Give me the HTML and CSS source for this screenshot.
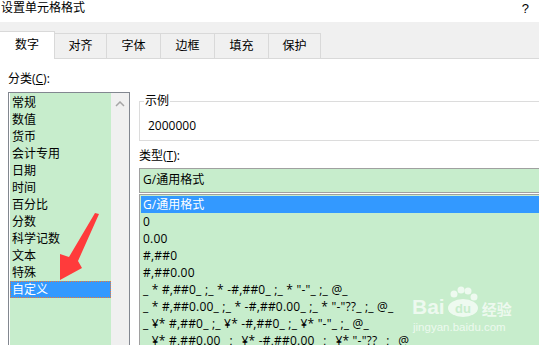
FILE: index.html
```html
<!DOCTYPE html>
<html lang="zh">
<head>
  <meta charset="UTF-8">
  <title>设置单元格格式</title>
  <link rel="stylesheet" href="styles.css">
</head>
<body>
  <div class="titlebar">
    <span class="title">设置单元格格式</span>
    <span class="help">?</span>
  </div>

  <div class="tabs">
    <div class="tab active" style="width:55px;">数字</div>
    <div class="tab" style="width:52px;">对齐</div>
    <div class="tab" style="width:54px;">字体</div>
    <div class="tab" style="width:54px;">边框</div>
    <div class="tab" style="width:54px;">填充</div>
    <div class="tab" style="width:52px;">保护</div>
  </div>

  <div class="content">
    <div class="left">
      <div class="label">分类(<u>C</u>):</div>
      <div class="catlist">
        <div class="items">
          <div class="item">常规</div>
          <div class="item">数值</div>
          <div class="item">货币</div>
          <div class="item">会计专用</div>
          <div class="item">日期</div>
          <div class="item">时间</div>
          <div class="item">百分比</div>
          <div class="item">分数</div>
          <div class="item">科学记数</div>
          <div class="item">文本</div>
          <div class="item">特殊</div>
          <div class="item selected">自定义</div>
        </div>
        <div class="scrollbar">
          <svg width="10" height="6" viewBox="0 0 10 6"><path d="M1 5 L5 1 L9 5" fill="none" stroke="#a6a6a6" stroke-width="1.5"/></svg>
        </div>
      </div>
    </div>

    <div class="right">
      <fieldset class="sample">
        <legend>示例</legend>
        <div class="sample-value">2000000</div>
      </fieldset>
      <div class="label type-label">类型(<u>T</u>):</div>
      <div class="type-input">G/通用格式</div>
      <div class="typelist">
        <div class="row selected">G/通用格式</div>
        <div class="row code">0</div>
        <div class="row code">0.00</div>
        <div class="row code">#,##0</div>
        <div class="row code">#,##0.00</div>
        <div class="row code">_ * #,##0_ ;_ * -#,##0_ ;_ * "-"_ ;_ @_</div>
        <div class="row code">_ * #,##0.00_ ;_ * -#,##0.00_ ;_ * "-"??_ ;_ @_</div>
        <div class="row code">_ ¥* #,##0_ ;_ ¥* -#,##0_ ;_ ¥* "-"_ ;_ @_</div>
        <div class="row code">_ ¥* #,##0.00_ ;_ ¥* -#,##0.00_ ;_ ¥* "-"??_ ;_ @_</div>
      </div>
    </div>
  </div>

  <svg class="arrow" width="539" height="345" viewBox="0 0 539 345">
    <polygon points="95,213 99,214 78,261 82,268 60,280 60,254 69,257" fill="#ff3b3b"/>
  </svg>

  <div class="watermark">
    <div class="wm-top">
      <span class="wm-bai">Bai</span>
      <svg width="36" height="32" viewBox="0 0 36 32">
        <circle cx="9" cy="8" r="3.5" fill="rgba(255,255,255,0.7)"/>
        <circle cx="16" cy="4" r="3.5" fill="rgba(255,255,255,0.7)"/>
        <circle cx="23" cy="5" r="3.5" fill="rgba(255,255,255,0.7)"/>
        <circle cx="29" cy="11" r="3.5" fill="rgba(255,255,255,0.7)"/>
        <ellipse cx="18" cy="22" rx="15" ry="9" fill="rgba(255,255,255,0.7)"/>
        <text x="18" y="27" text-anchor="middle" font-family="Liberation Sans, sans-serif" font-weight="bold" font-size="13" fill="#c7edcc">du</text>
      </svg>
      <span class="wm-cn">经验</span>
    </div>
    <div class="wm-url">jingyan.baidu.com</div>
  </div>
</body>
</html>
```

FILE: styles.css
```css
html, body {
  margin: 0;
  overflow: hidden;
}
body {
  width: 539px;
  height: 345px;
  position: relative;
  background: #fff;
  color: #000;
  font-family: "Open Sans", "Noto Sans CJK SC", "Microsoft YaHei", sans-serif;
  font-size: 12px;
}
.titlebar {
  height: 22px;
  display: flex;
  justify-content: space-between;
  align-items: flex-start;
  padding: 0 10px 0 1px;
  line-height: 15px;
}
.help {
  font-family: "Liberation Sans", sans-serif;
  font-size: 13px;
  padding-top: 1px;
}
.tabs {
  height: 36px;
  background: #f0f0f0;
  border-bottom: 1px solid #d9d9d9;
  display: flex;
  align-items: flex-end;
}
.tab {
  box-sizing: border-box;
  height: 25px;
  line-height: 24px;
  text-align: center;
  border-top: 1px solid #d9d9d9;
  border-right: 1px solid #d9d9d9;
}
.tab.active {
  height: 28px;
  line-height: 26px;
  background: #fff;
  margin-bottom: -1px;
}
.content {
  display: flex;
  padding-left: 8px;
}
.label {
  line-height: 17px;
  margin-top: 11px;
}
.catlist {
  margin-top: 5px;
  width: 120px;
  height: 270px;
  border: 1px solid #828790;
  display: flex;
}
.items {
  width: 101px;
  margin-left: 1px;
  padding-top: 1px;
  background: #c7edcc;
}
.item {
  height: 17px;
  line-height: 17px;
  padding-left: 2px;
}
.item.selected {
  box-sizing: border-box;
  background: #3399ff;
  color: #fff;
  border: 1px dotted #f07a30;
  padding-left: 1px;
  line-height: 15px;
}
.scrollbar {
  width: 18px;
  background: #f0f0f0;
  display: flex;
  justify-content: center;
  padding-top: 8px;
  box-sizing: border-box;
}
.right {
  width: 430px;
  flex: none;
  margin-left: 9px;
}
.sample {
  margin: 34px 0 0;
  padding: 0 0 6px 4px;
  border: 1px solid #dcdcdc;
  min-width: 0;
}
.sample legend {
  padding: 0 1px;
  line-height: 16px;
}
.sample-value {
  margin-top: 8px;
  padding-left: 4px;
  line-height: 17px;
}
.type-label {
  margin-top: 7px;
  line-height: 16px;
}
.type-input {
  margin-top: 4px;
  height: 23px;
  line-height: 21px;
  border: 1px solid #a0a0a0;
  background: #c7edcc;
  padding-left: 3px;
}
.typelist {
  margin-top: 1px;
  border: 1px solid #a0a0a0;
  padding: 1px;
  height: 200px;
  background: #c7edcc;
}
.row {
  height: 17px;
  line-height: 17px;
  padding-left: 2px;
  white-space: pre;
}
.row.code {
  letter-spacing: 0.2px;
}
.row.selected {
  background: #3399ff;
  color: #fff;
}
.arrow {
  position: absolute;
  left: 0;
  top: 0;
}
.watermark {
  position: absolute;
  left: 412px;
  top: 286px;
  color: rgba(255, 255, 255, 0.7);
}
.wm-top {
  display: flex;
  align-items: flex-end;
  height: 32px;
}
.wm-bai {
  font-family: "Liberation Sans", sans-serif;
  font-weight: bold;
  font-size: 21px;
  line-height: 20px;
  margin-bottom: 1px;
}
.wm-cn {
  font-size: 15px;
  font-weight: bold;
  line-height: 18px;
  margin-left: 1px;
}
.wm-url {
  font-family: "Liberation Sans", sans-serif;
  font-size: 11.5px;
  line-height: 14px;
  margin-top: 2px;
  margin-left: 1px;
}
```
